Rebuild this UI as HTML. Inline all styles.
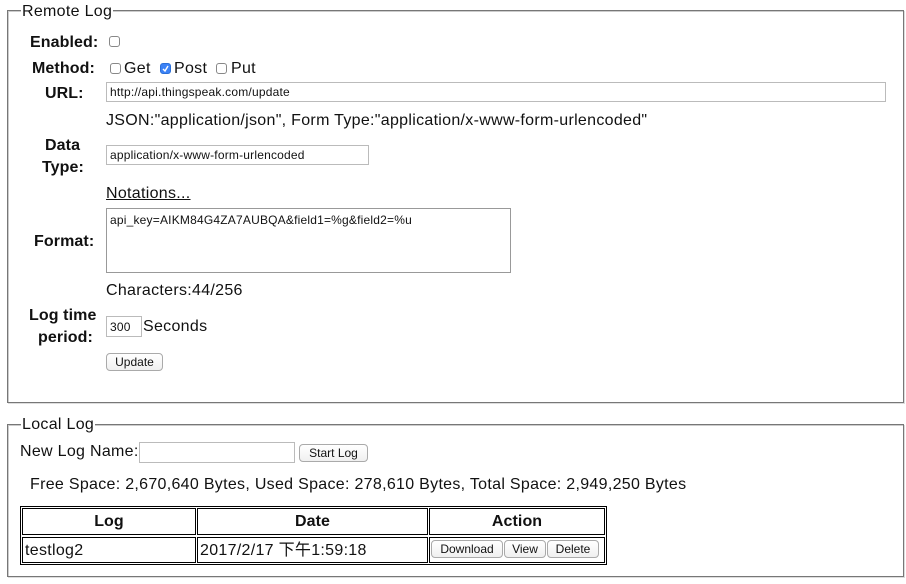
<!DOCTYPE html>
<html><head><meta charset="utf-8"><style>
body{margin:0;width:906px;height:584px;background:#fff;font-family:"Liberation Sans","Noto Sans CJK SC",sans-serif;font-size:16px;color:#111;position:relative;overflow:hidden}
.a{position:absolute;white-space:nowrap;line-height:18px;letter-spacing:0.3px;margin-top:1px}
.b{font-weight:bold;letter-spacing:0.1px}
.fs{position:absolute;border:1px solid #777;box-shadow:inset 1px 1px 0 #ccc,1px 1px 0 #ddd}
.lg{position:absolute;background:#fff;padding:0 1px;line-height:18px;letter-spacing:0.3px;margin-top:1px}
.in{position:absolute;border:1px solid #bbb;box-sizing:border-box;font-size:12px;line-height:16px;padding-left:3px;background:#fff;letter-spacing:0.2px;padding-top:1px}
.cb{position:absolute;width:11px;height:11px;border:1px solid #888;border-radius:3px;box-sizing:border-box;background:#fff}
.bt{position:absolute;border:1px solid #aaa;border-radius:4px;box-sizing:border-box;font-size:12px;text-align:center;background:linear-gradient(#fff,#f0f0f0);line-height:16px}
.c{position:absolute;border:1px solid #000;box-sizing:border-box}
</style></head><body>
<div class="fs" style="left:7px;top:10px;width:895px;height:391px"></div>
<div class="lg" style="left:21px;top:2px">Remote Log</div>
<div class="a b" style="left:30px;top:33px">Enabled:</div>
<div class="cb" style="left:109px;top:36px"></div>
<div class="a b" style="left:32px;top:59px">Method:</div>
<div class="cb" style="left:110px;top:63px"></div><div class="a" style="left:124px;top:59px">Get</div>
<div class="cb" style="left:160px;top:63px;background:#3b82f6;border-color:#2a6fd8"><svg width="9" height="9" style="position:absolute;left:0;top:0"><path d="M2 5 L4 7 L7 2" stroke="#fff" stroke-width="1.4" fill="none"/></svg></div><div class="a" style="left:174px;top:59px">Post</div>
<div class="cb" style="left:216px;top:63px"></div><div class="a" style="left:231px;top:59px">Put</div>
<div class="a b" style="left:45px;top:84px">URL:</div>
<div class="in" style="left:106px;top:82px;width:780px;height:20px">http://api.thingspeak.com/update</div>
<div class="a" style="left:106px;top:111px">JSON:"application/json", Form Type:"application/x-www-form-urlencoded"</div>
<div class="a b" style="left:45px;top:136px">Data</div>
<div class="a b" style="left:42px;top:158px">Type:</div>
<div class="in" style="left:106px;top:145px;width:263px;height:20px">application/x-www-form-urlencoded</div>
<div class="a" style="left:106px;top:184px;text-decoration:underline">Notations...</div>
<div class="in" style="left:106px;top:208px;width:405px;height:65px;border-color:#999;padding-top:3px">api_key=AIKM84G4ZA7AUBQA&amp;field1=%g&amp;field2=%u</div>
<div class="a b" style="left:34px;top:232px">Format:</div>
<div class="a" style="left:106px;top:281px">Characters:44/256</div>
<div class="a b" style="left:29px;top:306px">Log time</div>
<div class="a b" style="left:38px;top:328px">period:</div>
<div class="in" style="left:106px;top:316px;width:36px;height:21px;padding-top:2px">300</div>
<div class="a" style="left:143px;top:317px">Seconds</div>
<div class="bt" style="left:106px;top:353px;width:57px;height:18px">Update</div>

<div class="fs" style="left:7px;top:424px;width:895px;height:151px"></div>
<div class="lg" style="left:21px;top:415px">Local Log</div>
<div class="a" style="left:20px;top:442px">New Log Name:</div>
<div class="in" style="left:139px;top:442px;width:156px;height:21px"></div>
<div class="bt" style="left:299px;top:444px;width:69px;height:18px">Start Log</div>
<div class="a" style="left:30px;top:475px">Free Space: 2,670,640 Bytes, Used Space: 278,610 Bytes, Total Space: 2,949,250 Bytes</div>
<div class="c" style="left:20px;top:506px;width:587px;height:59px"></div>
<div class="c a b" style="left:22px;top:508px;width:174px;height:27px;text-align:center;line-height:25px;margin-top:0">Log</div>
<div class="c a b" style="left:197px;top:508px;width:231px;height:27px;text-align:center;line-height:25px;margin-top:0">Date</div>
<div class="c a b" style="left:429px;top:508px;width:176px;height:27px;text-align:center;line-height:25px;margin-top:0">Action</div>
<div class="c a" style="left:22px;top:537px;width:174px;height:26px;line-height:25px;padding-left:2px;margin-top:0">testlog2</div>
<div class="c a" style="left:197px;top:537px;width:231px;height:26px;line-height:25px;padding-left:2px;margin-top:0">2017/2/17 下午1:59:18</div>
<div class="c" style="left:429px;top:537px;width:176px;height:26px"></div>
<div class="bt" style="left:431px;top:540px;width:72px;height:18px">Download</div>
<div class="bt" style="left:504px;top:540px;width:42px;height:18px">View</div>
<div class="bt" style="left:547px;top:540px;width:52px;height:18px">Delete</div>
</body></html>
